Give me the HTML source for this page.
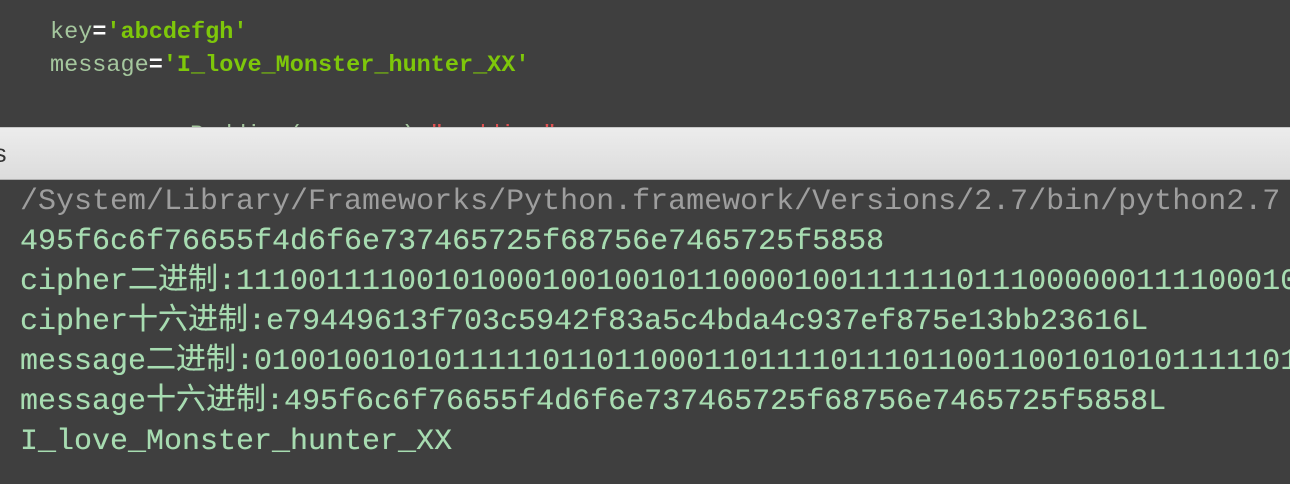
<!DOCTYPE html>
<html><head><meta charset="utf-8"><style>
body{margin:0;width:1290px;height:484px;overflow:hidden;background:#3f3f3f;position:relative;font-family:"Liberation Mono","Noto Sans CJK SC",monospace}
.code{position:absolute;left:50px;font-size:23.5px;white-space:pre;line-height:33px}
.v{color:#a5c79e}.s{color:#7ec70a;font-weight:bold}.eq{color:#fff;font-weight:bold}
.bar{position:absolute;left:0;top:127px;width:1290px;height:53px;background:linear-gradient(#ececec,#dcdcdc);border-top:1px solid #c8c8c8;border-bottom:1px solid #b0b0b0;box-sizing:border-box}
.bar span{position:absolute;left:-6px;top:12px;font-family:"Liberation Sans",sans-serif;font-size:25px;color:#333}
.out{position:absolute;left:20px;top:182px;font-size:30px;line-height:40px;white-space:pre;color:#a7dcb1;text-shadow:0 0 0.4px #a7dcb1}
.out .g{color:#9e9e9e;text-shadow:none}
</style></head><body>
<div class="code" style="top:16px"><span class="v">key</span><span class="eq">=</span><span class="s">'abcdefgh'</span></div>
<div class="code" style="top:49px"><span class="v">message</span><span class="eq">=</span><span class="s">'I_love_Monster_hunter_XX'</span></div>
<div class="code" style="top:119px;left:190px"><span class="v">Padding(message)</span><span style="color:#e05050"> "padding"</span></div>
<div class="bar"><span>s</span></div>
<div class="out"><span class="g">/System/Library/Frameworks/Python.framework/Versions/2.7/bin/python2.7</span>
495f6c6f76655f4d6f6e737465725f68756e7465725f5858
cipher二进制:111001111001010001001001011000010011111101110000001111000101
cipher十六进制:e79449613f703c5942f83a5c4bda4c937ef875e13bb23616L
message二进制:0100100101011111011011000110111101110110011001010101111101
message十六进制:495f6c6f76655f4d6f6e737465725f68756e7465725f5858L
I_love_Monster_hunter_XX</div>
</body></html>
